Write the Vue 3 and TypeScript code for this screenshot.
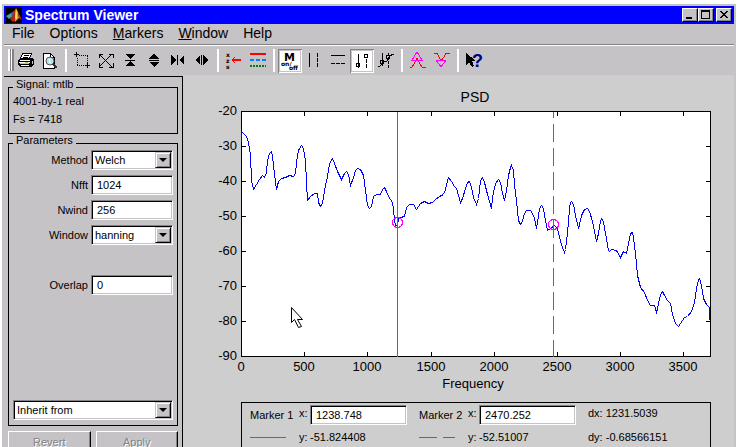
<script setup lang="ts">
import { ref } from 'vue'

interface Tool {
  id: string
  label: string
  gapBefore?: boolean
}

const tools: Tool[] = [
  { id: 'print', label: 'Print' },
  { id: 'preview', label: 'Print preview' },
  { id: 'zoom', label: 'Zoom', gapBefore: true },
  { id: 'full', label: 'Full view' },
  { id: 'yin', label: 'Zoom in y' },
  { id: 'yout', label: 'Zoom out y' },
  { id: 'xin', label: 'Zoom in x' },
  { id: 'xout', label: 'Zoom out x' },
  { id: 'select', label: 'Select trace', gapBefore: true },
  { id: 'line', label: 'Line properties' },
  { id: 'toggle', label: 'Toggle markers', gapBefore: true },
  { id: 'vertical', label: 'Vertical markers' },
  { id: 'horizontal', label: 'Horizontal markers' },
  { id: 'track', label: 'Track markers' },
  { id: 'slope', label: 'Track with slope' },
  { id: 'peaks', label: 'Peaks', gapBefore: true },
  { id: 'valleys', label: 'Valleys' },
  { id: 'help', label: 'What is this', gapBefore: true },
]
const pressed = ref<string[]>(['toggle', 'track'])

const menus = [
  { key: '', rest: 'File' },
  { key: '', rest: 'Options' },
  { key: 'M', rest: 'arkers' },
  { key: 'W', rest: 'indow' },
  { key: '', rest: 'Help' },
]

const method = ref('Welch')
const nfft = ref('1024')
const nwind = ref('256')
const windowType = ref('hanning')
const overlap = ref('0')
const inherit = ref('Inherit from')
const marker1 = ref('1238.748')
const marker2 = ref('2470.252')

const plotWidth = 469
const plotHeight = 245
const xTicks = [0, 500, 1000, 1500, 2000, 2500, 3000, 3500].map((value) => ({
  value,
  x: Math.round((value * 316) / 2500),
}))
const yTicks = [-20, -30, -40, -50, -60, -70, -80, -90].map((value, i) => ({ value, y: i * 35 }))

const trace = `
0,30 0,20 3,23 5,25 7,31 9,44 10,69 12,78 15,73 18,68 21,64 23,66 25,61 26,49 28,42 30,40 31,44 32,54
34,71 35,78 37,70 40,67 44,66 48,64 52,65 54,62 55,51 57,39 60,34 62,37 64,49 65,71 66,89 69,85 73,82 76,82
77,91 79,95 81,92 83,79 86,65 88,52 91,47 93,52 96,60 98,64 100,68 103,62 105,60 107,63 109,74 112,66 114,59
116,57 119,58 122,64 124,79 126,94 128,97 130,95 132,85 135,83 139,83 141,78 143,76 145,80 147,85 151,91
152,97 153,109 154,114 156,114 157,107 159,106 163,105 165,96 168,93 172,93 175,98 179,92 183,90 187,92
191,91 194,88 198,85 202,83 204,78 206,69 207,66 210,70 213,75 215,77 217,84 219,91 221,87 224,77 226,71
228,70 230,76 232,86 235,93 237,87 239,69 241,66 243,71 246,83 250,97 251,86 254,72 257,68 259,71 261,82
263,89 265,79 267,64 269,56 270,54 272,59 273,74 275,89 277,109 279,113 281,110 283,102 285,99 289,99
291,102 293,107 295,117 296,111 298,97 300,94 302,97 304,109 306,119 309,117 313,114 316,117 318,126
321,136 323,141 324,138 326,122 328,97 329,91 330,90 332,93 334,104 337,117 338,113 340,104 343,98 346,97
348,100 351,110 355,130 357,122 359,110 360,107 362,110 364,122 367,139 368,140 370,138 375,139 379,146
382,140 385,142 387,132 389,122 391,121 392,126 394,142 396,164 399,176 403,181 406,189 409,194 413,194
415,201 416,197 419,183 421,180 423,184 426,189 429,192 431,203 434,212 437,215 439,212 443,206 446,205
450,200 453,191 455,177 457,168 458,167 460,174 462,187 465,193 468,196 468,208`
</script>

<template>
  <main class="window">
    <header class="titlebar">
      <svg class="logo" viewBox="0 0 16 16" aria-hidden="true">
        <rect width="16" height="16" fill="#000" />
        <path d="M0 9 5 6 7 9 3 12z" fill="#3ea6a6" />
        <path d="M5 6 8 4 8 9 6 10z" fill="#5560a0" />
        <path d="M6 10 8 4 10 1 11 7 9 14 7 15 4 12z" fill="#b52810" />
        <path d="M10 1 12 5 13 11 11 13 9 15 9 8z" fill="#ff8a20" />
        <path d="M10 2 11 6 11 12 9 11z" fill="#ffe060" />
        <path d="M12 5 16 13 13 11z" fill="#c53010" />
      </svg>
      <h1>Spectrum Viewer</h1>
      <div class="window-buttons">
        <button type="button" aria-label="Minimize">
          <svg viewBox="0 0 14 12"><path d="M3 8h6v2H3z" /></svg>
        </button>
        <button type="button" aria-label="Maximize">
          <svg viewBox="0 0 14 12"><path fill-rule="evenodd" d="M2 1h9v9H2zM3 3v6h7V3z" /></svg>
        </button>
        <button type="button" class="close" aria-label="Close">
          <svg viewBox="0 0 14 12">
            <path d="M3 2h2v1h1v1h2V3h1V2h2v1h-1v1H9v1H8v1h1v1h1v1h1v1H9V8H8V7H6v1H5v1H3V8h1V7h1V6h1V5H5V4H4V3H3z" />
          </svg>
        </button>
      </div>
    </header>

    <nav class="menubar">
      <a v-for="menu in menus" :key="menu.rest" href="#"><u v-if="menu.key">{{ menu.key }}</u>{{ menu.rest }}</a>
    </nav>

    <div class="toolbar" role="toolbar" aria-label="Tools">
      <span class="grip"></span>
      <template v-for="tool in tools" :key="tool.id">
        <span v-if="tool.gapBefore" class="separator"></span>
        <button type="button" class="tool" :class="{ pressed: pressed.includes(tool.id) }" :aria-label="tool.label">
          <svg viewBox="0 0 24 24" aria-hidden="true">
            <g v-if="tool.id === 'print'">
              <path d="M9 4h9l-3 6H6z" fill="#fff" stroke="#000" />
              <path d="M10 6h5M9 8h5" stroke="#000" />
              <path d="M4 11 7 9h11l2 2v4l-3 3H6l-2-2z" fill="#000" />
              <path d="M6 11h10M5 13h11M7 16h8" stroke="#fff" />
              <path d="M6 14h9" stroke="#c6c3c6" />
              <path d="M18 12v3" stroke="#c6c3c6" />
              <path d="M11 13h3" stroke="#e0c000" />
            </g>
            <g v-else-if="tool.id === 'preview'">
              <path d="M5 4h7l4 4v11H5z" fill="#fff" stroke="#000" />
              <path d="M12 4v4h4" fill="none" stroke="#000" />
              <circle cx="12" cy="12" r="4" fill="#b8e4ee" stroke="#555" shape-rendering="auto" />
              <path d="M11 10v3h2" fill="none" stroke="#fff" />
              <path d="m15 15 4 4" stroke="#333" stroke-width="2" />
            </g>
            <g v-else-if="tool.id === 'zoom'">
              <path d="M4 5h5M6 3v5M15 16h5M17 14v5" stroke="#000" />
              <path d="M9 6h9M7 9v8M17 7v7M7 16h8" stroke="#000" stroke-dasharray="1 1" />
            </g>
            <g v-else-if="tool.id === 'full'" fill="none" stroke="#000">
              <path d="m5 5 13 13M18 5 5 18M5 9V5h4M15 5h4v4M5 14v4h4M15 18h4v-4" />
            </g>
            <g v-else-if="tool.id === 'yin'">
              <path d="M7 5h10l-5 5zM7 11h10v1H7zM12 12l5 5H7z" />
            </g>
            <g v-else-if="tool.id === 'yout'">
              <path d="m12 4 5 6H7zM7 11h10v1H7zM7 13h10l-5 5z" />
            </g>
            <g v-else-if="tool.id === 'xin'">
              <path d="m5 6 5 5-5 5zM11 6h1v10h-1zM18 6l-5 5 5 5z" />
            </g>
            <g v-else-if="tool.id === 'xout'">
              <path d="m10 6-5 5 5 5zM11 6h1v10h-1zM13 6l5 5-5 5z" />
            </g>
            <g v-else-if="tool.id === 'select'">
              <text class="tiny"><tspan x="4" y="8">x</tspan><tspan x="4" y="14">z</tspan><tspan x="4" y="20">s</tspan></text>
              <path d="M19 11h-9M13 8l-3 3 3 3" fill="none" stroke="#f00" />
              <path d="M10 10h9v1h-9z" fill="#f00" />
            </g>
            <g v-else-if="tool.id === 'line'" stroke-width="2">
              <path d="M4 5h16" stroke="#f00" />
              <path d="M4 11h16" stroke="#0080ff" stroke-dasharray="4 2" />
              <path d="M4 17h16" stroke="#008000" stroke-dasharray="2 1" />
            </g>
            <g v-else-if="tool.id === 'toggle'">
              <text><tspan x="6" y="12" class="letter">M</tspan><tspan x="3" y="17" class="tiny">on/</tspan><tspan x="11" y="21" class="tiny">off</tspan></text>
            </g>
            <g v-else-if="tool.id === 'vertical'" stroke="#000">
              <path d="M7 4v14" />
              <path d="M15 4v14" stroke-dasharray="4 1" />
            </g>
            <g v-else-if="tool.id === 'horizontal'" stroke="#000">
              <path d="M5 6h14" />
              <path d="M5 14h14" stroke-dasharray="4 1" />
            </g>
            <g v-else-if="tool.id === 'track'" fill="none" stroke="#000">
              <path d="M8 5v14" />
              <circle cx="8" cy="16" r="2" />
              <circle cx="16" cy="7" r="2" />
              <path d="M16 10v9" stroke-dasharray="4 1" />
            </g>
            <g v-else-if="tool.id === 'slope'" fill="none" stroke="#000">
              <path d="M4 17h2l3-3 2-2h2l3-5 3-2h1" />
              <path d="M8 4v13" />
              <path d="M14 4v15" stroke-dasharray="3 1" />
              <circle cx="8" cy="13" r="2" />
              <circle cx="14" cy="8" r="2" />
            </g>
            <g v-else-if="tool.id === 'peaks'" fill="none">
              <path d="M4 18h2l2-3 3-6 3 6 2 3h4" stroke="#f00" />
              <path d="m11 3 5 8H6z" stroke="#f0f" />
            </g>
            <g v-else-if="tool.id === 'valleys'" fill="none">
              <path d="M4 4h3l2 4 2 4 3-4 2-4h4" stroke="#f00" />
              <path d="m11 18-5-7h10z" stroke="#f0f" />
            </g>
            <g v-else>
              <text x="10" y="18" class="question">?</text>
              <path d="M4 4v12l3-3 3 5 2-1-2-5h4z" />
            </g>
          </svg>
        </button>
      </template>
    </div>

    <div class="body">
      <aside class="sidebar">
        <fieldset class="signal">
          <legend>Signal: mtlb</legend>
          <p>4001-by-1 real</p>
          <p>Fs = 7418</p>
        </fieldset>

        <fieldset class="parameters">
          <legend>Parameters</legend>
          <div class="row">
            <label for="method">Method</label>
            <span class="dropdown">
              <select id="method" v-model="method"><option>Welch</option></select>
              <i class="arrow"></i>
            </span>
          </div>
          <div class="row">
            <label for="nfft">Nfft</label>
            <input id="nfft" v-model="nfft" type="text" />
          </div>
          <div class="row">
            <label for="nwind">Nwind</label>
            <input id="nwind" v-model="nwind" type="text" />
          </div>
          <div class="row">
            <label for="window-type">Window</label>
            <span class="dropdown">
              <select id="window-type" v-model="windowType"><option>hanning</option></select>
              <i class="arrow"></i>
            </span>
          </div>
          <div class="row overlap">
            <label for="overlap">Overlap</label>
            <input id="overlap" v-model="overlap" type="text" />
          </div>
          <span class="dropdown inherit">
            <select v-model="inherit" aria-label="Inherit from"><option>Inherit from</option></select>
            <i class="arrow"></i>
          </span>
        </fieldset>

        <div class="actions">
          <button type="button" disabled>Revert</button>
          <button type="button" disabled>Apply</button>
        </div>
      </aside>

      <section class="display">
        <svg class="chart" viewBox="-58 -36 551 327" role="img" aria-label="PSD">
          <rect :width="plotWidth" :height="plotHeight" fill="#fff" />
          <g transform="translate(0.5 0.5)" fill="none" shape-rendering="crispEdges">
            <g stroke="#000">
              <rect :width="plotWidth" :height="plotHeight" />
              <path v-for="tick in xTicks" :key="tick.value" :d="`M${tick.x} 0v4M${tick.x} ${plotHeight}v-5`" />
              <path v-for="tick in yTicks" :key="tick.value" :d="`M0 ${tick.y}h4M${plotWidth} ${tick.y}h-5`" />
            </g>
            <polyline :points="trace" stroke="#00f" />
            <g stroke="#f0f">
              <path :d="`M156 0v${plotHeight}`" />
              <path :d="`M312 0v${plotHeight}`" stroke-dasharray="18 6" stroke-dashoffset="12" />
              <circle cx="156" cy="111" r="5" />
              <circle cx="312" cy="113" r="5" />
            </g>
          </g>
          <g class="axis-text">
            <text v-for="tick in xTicks" :key="tick.value" :x="tick.x" y="260" text-anchor="middle">{{ tick.value }}</text>
            <text v-for="tick in yTicks" :key="tick.value" x="-4" :y="tick.y + 4" text-anchor="end">{{ tick.value }}</text>
            <text x="232" y="277" text-anchor="middle">Frequency</text>
            <text x="234" y="-9" text-anchor="middle" class="chart-title">PSD</text>
          </g>
          <path d="M50 196v15l3-3 4 8 3-1-4-7h5z" transform="translate(0.5 0.5)" fill="#fff" stroke="#000" />
        </svg>

        <div class="markers">
          <div class="marker">
            <label for="marker1">Marker 1</label>
            <span class="axis">x:</span>
            <input id="marker1" v-model="marker1" type="text" />
            <svg class="sample" viewBox="0 0 36 1"><path d="M0 0h36v1H0z" /></svg>
            <span>y:</span>
            <span>-51.824408</span>
          </div>
          <div class="marker">
            <label for="marker2">Marker 2</label>
            <span class="axis">x:</span>
            <input id="marker2" v-model="marker2" type="text" />
            <svg class="sample" viewBox="0 0 36 1"><path d="M0 0h18v1H0zM24 0h12v1H24z" /></svg>
            <span>y:</span>
            <span>-52.51007</span>
          </div>
          <div class="delta">
            <span class="axis">dx: 1231.5039</span>
            <span>dy: -0.68566151</span>
          </div>
        </div>
      </section>
    </div>
  </main>
</template>

<style>
html,
body,
#app {
  height: 100%;
}

#app {
  display: flow-root;
}

body {
  background: #fff;
  overflow: hidden;
}
</style>

<style scoped>
.window {
  --face: #c6c3c6;
  --shade: #848284;
  box-sizing: border-box;
  min-height: calc(100% - 4px);
  margin: 4px 8px 0 2px;
  padding: 2px;
  display: flex;
  flex-direction: column;
  background: var(--face);
  color: #000;
  font: 11px/12px "Liberation Sans", Arial, sans-serif;
}

button,
input,
select {
  font: inherit;
  color: inherit;
  box-sizing: border-box;
  margin: 0;
  border-radius: 0;
}

.titlebar {
  display: flex;
  align-items: center;
  height: 18px;
  padding: 0 2px;
  background: #00f;
  color: #fff;
}

.logo {
  width: 16px;
  height: 16px;
}

h1 {
  flex: 1;
  margin: 0 0 0 3px;
  font-size: 14px;
  line-height: 18px;
}

.window-buttons {
  display: flex;
}

.window-buttons button {
  width: 16px;
  height: 14px;
  padding: 0;
  border: 1px solid;
  border-color: #fff #000 #000 #fff;
  background: var(--face);
  box-shadow: inset -1px -1px var(--shade);
}

.window-buttons .close {
  margin-left: 2px;
}

.window-buttons svg {
  display: block;
  width: 14px;
  height: 12px;
  fill: #000;
  shape-rendering: crispEdges;
}

.menubar {
  display: flex;
  gap: 15px;
  height: 20px;
  padding-left: 8px;
  border-bottom: 1px solid var(--shade);
  font-size: 14px;
  line-height: 18px;
}

.menubar a {
  color: inherit;
  text-decoration: none;
}

.toolbar {
  display: flex;
  padding: 3px 0 2px 4px;
  border-top: 1px solid #fff;
}

.grip {
  box-sizing: border-box;
  width: 6px;
  height: 22px;
  border: solid;
  border-width: 0 2px;
  border-color: #fff var(--shade) #fff #fff;
  box-shadow: inset 1px 0 var(--shade), inset -1px 0 #fff;
}

.separator {
  width: 2px;
  height: 23px;
  margin: 0 3px;
  box-sizing: border-box;
  border: solid;
  border-width: 0 1px;
  border-color: var(--shade) #fff;
}

.tool {
  width: 24px;
  height: 24px;
  padding: 0;
  border: 0;
  background: none;
}

.tool.pressed {
  background: #fff;
  box-shadow: inset 1px 1px var(--shade), inset -1px -1px #fff, inset 2px 2px var(--face), inset -2px -2px var(--face);
}

.tool svg {
  display: block;
  width: 24px;
  height: 24px;
  shape-rendering: crispEdges;
}

.tiny {
  font: bold 6px "DejaVu Sans", sans-serif;
}

.letter {
  font: bold 11px "DejaVu Sans", sans-serif;
}

.question {
  font: bold 18px "Liberation Sans", sans-serif;
  fill: #000084;
}

.body {
  flex: 1;
  display: flex;
}

.sidebar {
  box-sizing: border-box;
  flex: none;
  width: 179px;
  margin-top: 1px;
  padding: 3px 4px;
  border-top: 1px solid #000;
  border-right: 1px solid #000;
}

fieldset {
  min-width: 0;
  margin: 0 0 2px;
  padding: 0 4px;
  border: 1px solid #000;
}

legend {
  height: 14px;
  padding: 0 3px;
  line-height: 8px;
}

.signal p {
  margin: 1px 0 6px;
}

.signal p + p {
  margin-bottom: 8px;
}

.parameters {
  margin-bottom: 5px;
  padding-bottom: 5px;
}

.row {
  display: grid;
  grid-template-columns: 1fr 82px;
  column-gap: 3px;
  align-items: center;
  height: 20px;
  margin-bottom: 5px;
}

.row label {
  text-align: right;
}

.overlap {
  margin-top: 30px;
}

.inherit {
  margin-top: 105px;
}

input,
select {
  width: 100%;
  height: 20px;
  padding: 0 5px;
  border: 1px solid;
  border-color: var(--shade) #fff #fff var(--shade);
  background: #fff;
  box-shadow: inset 1px 1px #000, inset -1px -1px var(--face);
  outline: 0;
}

select {
  appearance: none;
  padding: 0 18px 0 3px;
}

.dropdown {
  display: grid;
}

.dropdown > * {
  grid-area: 1 / 1;
}

.arrow {
  display: grid;
  place-items: center;
  align-self: center;
  justify-self: end;
  box-sizing: border-box;
  width: 16px;
  height: 16px;
  margin-right: 2px;
  border: 1px solid;
  border-color: var(--face) #000 #000 var(--face);
  background: var(--face);
  box-shadow: inset 1px 1px #fff, inset -1px -1px var(--shade);
  pointer-events: none;
}

.arrow::before {
  content: "";
  border: 4px solid transparent;
  border-top-color: #000;
  border-bottom-width: 0;
}

.actions {
  display: flex;
  gap: 5px;
}

.actions button {
  flex: 1;
  height: 22px;
  padding: 0;
  border: 1px solid;
  border-color: #fff #000 #000 #fff;
  background: var(--face);
  box-shadow: inset -1px -1px var(--shade);
  color: var(--shade);
  text-shadow: 1px 1px #fff;
}

.display {
  flex: 1;
  min-width: 0;
  background: #cecece;
}

.chart {
  display: block;
  width: 100%;
  height: auto;
}

.axis-text {
  font-size: 13px;
}

.chart-title {
  font-size: 14px;
}

.markers {
  display: flex;
  gap: 12px;
  margin: 0 23px 0 58px;
  padding: 2px 8px;
  border: 1px solid #000;
  white-space: nowrap;
}

.marker {
  display: grid;
  grid-template-columns: 49px 11px 97px;
  grid-template-rows: 20px 18px;
  row-gap: 3px;
  align-items: center;
}

.axis {
  padding-bottom: 4px;
}

.sample {
  width: 36px;
  height: 1px;
  fill: #f0f;
}

.delta {
  display: grid;
  grid-template-rows: 20px 18px;
  row-gap: 3px;
  align-items: center;
}
</style>
